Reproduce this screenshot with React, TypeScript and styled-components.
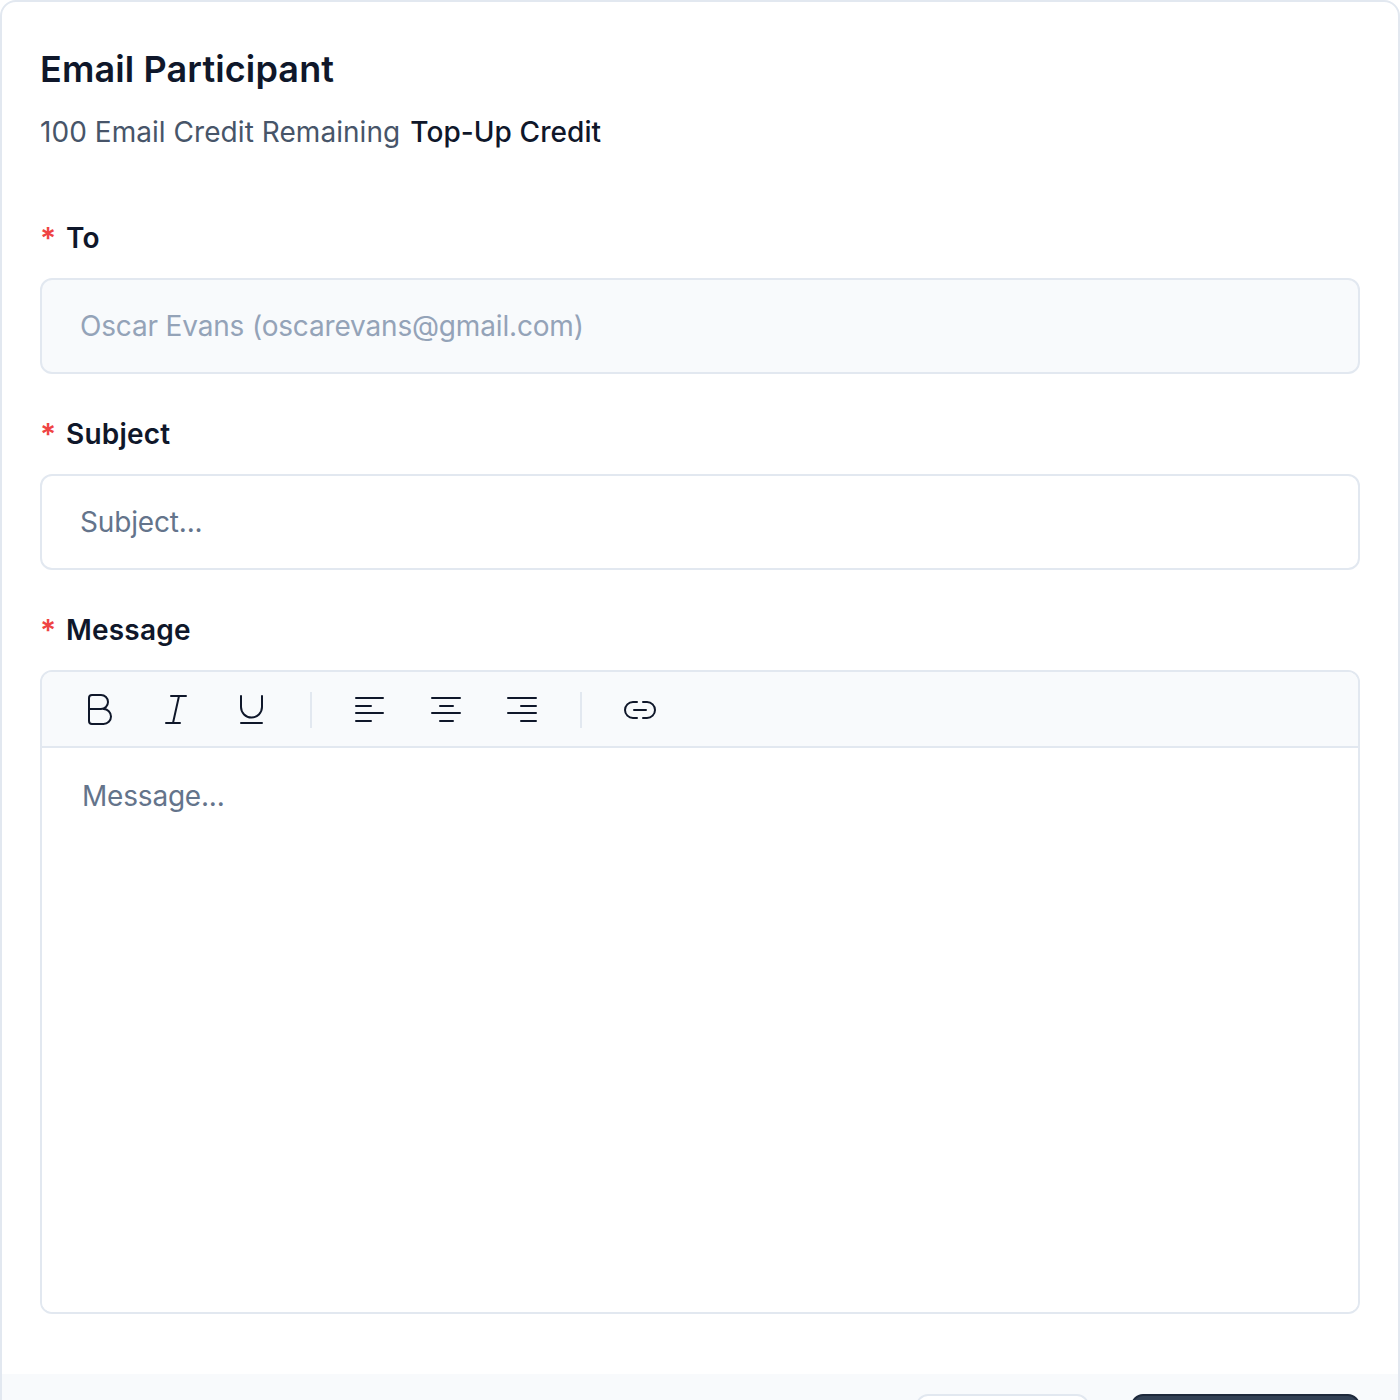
import React from "react";
import styled, { createGlobalStyle } from "styled-components";

const GlobalStyle = createGlobalStyle`
  html, body {
    margin: 0;
    height: 1400px;
    overflow: hidden;
    background: #ffffff;
    font-family: Inter, "Liberation Sans", sans-serif;
  }
  * { box-sizing: border-box; }
`;

const Card = styled.div`
  width: 1400px;
  background: #ffffff;
  border: 2px solid #e2e8f0;
  border-radius: 16px;
  overflow: hidden;
`;

const Body = styled.div`
  display: flex;
  flex-direction: column;
  padding: 45px 38px 60px;
`;

const Title = styled.h2`
  margin: 0;
  font-size: 36px;
  line-height: 44px;
  font-weight: 600;
  letter-spacing: 0.12px;
  color: #0f172a;
`;

const Credits = styled.div`
  display: flex;
  gap: 10px;
  margin-top: 21px;
  font-size: 28px;
  line-height: 40px;
  letter-spacing: 0.05px;
  color: #475569;
`;

const TopUp = styled.span`
  color: #0f172a;
  font-weight: 500;
  letter-spacing: 0.08px;
`;

const Fields = styled.div`
  display: flex;
  flex-direction: column;
  gap: 40px;
  margin-top: 66px;
`;

const Field = styled.div`
  display: flex;
  flex-direction: column;
`;

const Label = styled.label`
  display: flex;
  align-items: center;
  gap: 12px;
  height: 40px;
  margin-bottom: 20px;
  font-size: 28px;
  font-weight: 600;
  letter-spacing: 0.2px;
  color: #0f172a;
`;

const Required = styled.span`
  width: 14px;
  font-size: 30px;
  font-weight: 600;
  color: #ef4444;
`;

const Input = styled.div<{ $disabled?: boolean }>`
  display: flex;
  align-items: center;
  height: 96px;
  padding: 0 38px;
  border: 2px solid #e2e8f0;
  border-radius: 12px;
  font-size: 28px;
  letter-spacing: -0.17px;
  background: ${(p) => (p.$disabled ? "#f8fafc" : "#ffffff")};
  color: ${(p) => (p.$disabled ? "#94a3b8" : "#64748b")};
`;

const Editor = styled.div`
  display: flex;
  flex-direction: column;
  height: 644px;
  border: 2px solid #e2e8f0;
  border-radius: 12px;
  overflow: hidden;
`;

const Toolbar = styled.div`
  display: flex;
  align-items: center;
  height: 76px;
  padding: 2px 28px 0;
  background: #f8fafc;
  border-bottom: 2px solid #e2e8f0;
`;

const ToolButton = styled.span`
  display: flex;
  align-items: center;
  justify-content: center;
  width: 60px;
  height: 40px;
  margin-right: 16px;

  &:last-child {
    margin-right: 0;
  }
`;

const Divider = styled.span`
  width: 2px;
  height: 36px;
  margin: 0 28px 0 12px;
  background: #e2e8f0;
`;

const MessageArea = styled.div`
  flex: 1;
  padding: 28px 40px;
  font-size: 28px;
  line-height: 40px;
  letter-spacing: -0.2px;
  color: #64748b;
  background: #ffffff;
`;

const Footer = styled.div`
  display: flex;
  justify-content: flex-end;
  gap: 42px;
  height: 100px;
  padding: 20px 38px;
  background: #f8fafc;
`;

const Button = styled.button<{ $primary?: boolean }>`
  height: 60px;
  width: ${(p) => (p.$primary ? "229px" : "173px")};
  border-radius: 12px;
  border: 2px solid ${(p) => (p.$primary ? "#1e293b" : "#e2e8f0")};
  background: ${(p) => (p.$primary ? "#334155" : "#ffffff")};
  color: ${(p) => (p.$primary ? "#ffffff" : "#0f172a")};
  font-family: inherit;
  font-size: 28px;
  font-weight: 500;
`;

const Icon = ({ children }: { children: React.ReactNode }) => (
  <svg
    width="32"
    height="32"
    viewBox="0 0 32 32"
    fill="none"
    stroke="#0f172a"
    strokeWidth="2"
    strokeLinecap="round"
    strokeLinejoin="round"
  >
    {children}
  </svg>
);

const App = () => (
  <>
    <GlobalStyle />
    <Card>
      <Body>
        <Title>Email Participant</Title>
        <Credits>
          <span>100 Email Credit Remaining</span>
          <TopUp>Top-Up Credit</TopUp>
        </Credits>

        <Fields>
          <Field>
            <Label>
              <Required>*</Required>To
            </Label>
            <Input $disabled>Oscar Evans (oscarevans@gmail.com)</Input>
          </Field>

          <Field>
            <Label>
              <Required>*</Required>Subject
            </Label>
            <Input>Subject...</Input>
          </Field>

          <Field>
            <Label>
              <Required>*</Required>Message
            </Label>
            <Editor>
              <Toolbar>
                <ToolButton>
                  <Icon>
                    <path d="M5 15V4a3 3 0 0 1 3-3h9a7 7 0 0 1 0 14H5Zm0 0v12a3 3 0 0 0 3 3h11.500a7.500 7.500 0 0 0 0-15" />
                  </Icon>
                </ToolButton>
                <ToolButton>
                  <Icon>
                    <path d="M11 2h15M6 29h14M19 2l-6 27" />
                  </Icon>
                </ToolButton>
                <ToolButton>
                  <Icon>
                    <path d="M5 2v11a10.500 10.500 0 0 0 21 0V2M5 29h21" />
                  </Icon>
                </ToolButton>
                <Divider />
                <ToolButton>
                  <Icon>
                    <path d="M2 4h27M2 12h15M2 19h27M2 27h15" />
                  </Icon>
                </ToolButton>
                <ToolButton>
                  <Icon>
                    <path d="M2 4h28M10 12h13M2 19h28M10 27h13" />
                  </Icon>
                </ToolButton>
                <ToolButton>
                  <Icon>
                    <path d="M2 4h28M15 12h15M2 19h28M15 27h15" />
                  </Icon>
                </ToolButton>
                <Divider />
                <ToolButton>
                  <Icon>
                    <path d="M13 8H9a8 8 0 0 0 0 16h4M19 8h4a8 8 0 0 1 0 16h-4M10 16h12" />
                  </Icon>
                </ToolButton>
              </Toolbar>
              <MessageArea>Message...</MessageArea>
            </Editor>
          </Field>
        </Fields>
      </Body>
      <Footer>
        <Button>Cancel</Button>
        <Button $primary>Send Email</Button>
      </Footer>
    </Card>
  </>
);

export default App;
